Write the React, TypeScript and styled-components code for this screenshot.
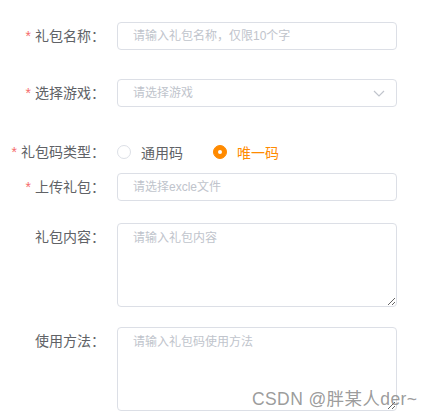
import styled, { createGlobalStyle } from 'styled-components';

const GlobalStyle = createGlobalStyle`
  html, body {
    margin: 0;
    padding: 0;
    background: #fff;
  }
  body {
    font-family: "Liberation Sans", "Noto Sans CJK SC", sans-serif;
  }
`;

const Page = styled.div`
  position: relative;
  width: 432px;
  height: 420px;
  overflow: hidden;
  padding-top: 22px;
  box-sizing: border-box;
`;

const Form = styled.form`
  display: flex;
  flex-direction: column;
`;

const Row = styled.div<{ $gap: number }>`
  display: grid;
  grid-template-columns: 117px 280px;
  align-items: start;
  margin-bottom: ${(p) => p.$gap}px;
`;

const Label = styled.label<{ $required?: boolean }>`
  box-sizing: border-box;
  padding-right: 12px;
  text-align: right;
  font-size: 14px;
  line-height: 28px;
  color: #606266;
  white-space: nowrap;

  &::before {
    content: ${(p) => (p.$required ? "'*'" : "none")};
    color: #f56c6c;
    margin-right: 4px;
  }
`;

const fieldBase = `
  box-sizing: border-box;
  width: 280px;
  border: 1px solid #dcdfe6;
  border-radius: 4px;
  background: #fff;
  color: #606266;
  font-family: "Liberation Sans", "Noto Sans CJK SC", sans-serif;
  font-size: 12px;
  outline: none;
  &::placeholder {
    color: #c0c4cc;
  }
`;

const Input = styled.input`
  ${fieldBase}
  height: 28px;
  padding: 0 15px;
  line-height: 26px;
`;

const SelectBox = styled.div`
  position: relative;
  width: 280px;
  height: 28px;
`;

const SelectInput = styled(Input)`
  padding-right: 30px;
  cursor: pointer;
`;

const Arrow = styled.svg`
  position: absolute;
  right: 11px;
  top: 7px;
  width: 14px;
  height: 14px;
`;

const TextArea = styled.textarea`
  ${fieldBase}
  display: block;
  height: 84px;
  padding: 5px 15px;
  line-height: 18px;
  resize: vertical;
`;

const RadioGroup = styled.div`
  display: flex;
  align-items: center;
  height: 28px;
`;

const RadioItem = styled.label<{ $checked?: boolean }>`
  display: flex;
  align-items: center;
  margin-right: 30px;
  font-size: 14px;
  color: ${(p) => (p.$checked ? '#ff8a00' : '#606266')};
  cursor: pointer;
`;

const RadioDot = styled.span<{ $checked?: boolean }>`
  box-sizing: border-box;
  width: 14px;
  height: 14px;
  border-radius: 50%;
  border: 1px solid ${(p) => (p.$checked ? '#ff8a00' : '#dcdfe6')};
  background: ${(p) => (p.$checked ? '#ff8a00' : '#fff')};
  margin-right: 10px;
  display: flex;
  align-items: center;
  justify-content: center;

  &::after {
    content: '';
    width: 4px;
    height: 4px;
    border-radius: 50%;
    background: #fff;
    display: ${(p) => (p.$checked ? 'block' : 'none')};
  }
`;

const Watermark = styled.div`
  position: absolute;
  left: 252px;
  top: 388px;
  font-size: 17.5px;
  letter-spacing: 0.4px;
  line-height: 22px;
  color: rgba(130, 130, 130, 0.8);
  white-space: nowrap;
  pointer-events: none;
`;

export default function App() {
  return (
    <Page>
      <GlobalStyle />
      <Form>
        <Row $gap={29}>
          <Label $required>礼包名称：</Label>
          <Input placeholder="请输入礼包名称，仅限10个字" />
        </Row>
        <Row $gap={31}>
          <Label $required>选择游戏：</Label>
          <SelectBox>
            <SelectInput readOnly placeholder="请选择游戏" />
            <Arrow viewBox="0 0 14 14">
              <polyline points="2,5 7,10 12,5" fill="none" stroke="#c0c4cc" strokeWidth="1.2" />
            </Arrow>
          </SelectBox>
        </Row>
        <Row $gap={7}>
          <Label $required>礼包码类型：</Label>
          <RadioGroup>
            <RadioItem>
              <RadioDot />
              通用码
            </RadioItem>
            <RadioItem $checked>
              <RadioDot $checked />
              唯一码
            </RadioItem>
          </RadioGroup>
        </Row>
        <Row $gap={22}>
          <Label $required>上传礼包：</Label>
          <Input placeholder="请选择excle文件" />
        </Row>
        <Row $gap={20}>
          <Label>礼包内容：</Label>
          <TextArea placeholder="请输入礼包内容" />
        </Row>
        <Row $gap={0}>
          <Label>使用方法：</Label>
          <TextArea placeholder="请输入礼包码使用方法" />
        </Row>
      </Form>
      <Watermark>CSDN @胖某人der~</Watermark>
    </Page>
  );
}
